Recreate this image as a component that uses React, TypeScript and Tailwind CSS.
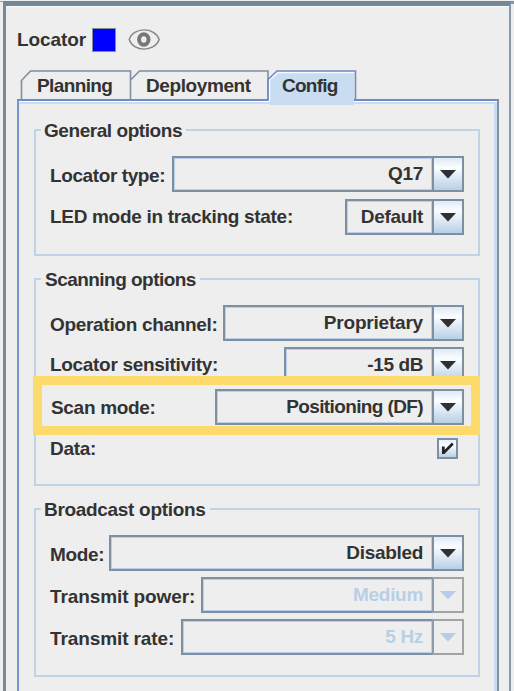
import type { ReactNode } from "react";

type ComboProps = { value: string; width: string; tracking?: string; disabled?: boolean };

function Combo({ value, width, tracking = "", disabled = false }: ComboProps) {
  return (
    <div className={`flex h-9 shrink-0 ${width}`}>
      <div className="flex min-w-0 flex-1 border-y-2 border-l-2 border-[#7d8fa1]">
        <div
          className={`flex flex-1 items-center justify-end border border-[#b9d0e8] pr-[8px] ${tracking} ${
            disabled ? "text-[#b8cfe5]" : "text-[#333333]"
          }`}
        >
          {value}
        </div>
      </div>
      <div
        className={`flex w-8 items-center justify-center border-2 ${
          disabled
            ? "border-[#a3a3a6] border-l-[#8c9caf] bg-[#eeeeee]"
            : "border-[#7d8fa1] bg-linear-to-b from-[#dfeaf5] via-[#fbfdff] via-30% to-[#b9cfe6]"
        }`}
      >
        <svg width="18" height="10" viewBox="0 0 18 10">
          <path d="M1 1H17L9 9.5Z" fill={disabled ? "#b5cde5" : "#303030"} />
        </svg>
      </div>
    </div>
  );
}

type RowProps = { label: string; shift?: string; tracking?: string; children: ReactNode };

function Row({ label, shift = "pt-[3px]", tracking = "", children }: RowProps) {
  return (
    <div className="flex h-9 items-center justify-between">
      <span className={`${shift} ${tracking}`}>{label}</span>
      {children}
    </div>
  );
}

type GroupProps = { title: string; className: string; titleClass: string; children: ReactNode };

function Group({ title, className, titleClass, children }: GroupProps) {
  return (
    <section className={`relative flex flex-col border-2 border-[#bed3e8] px-[14px] pt-[25px] ${className}`}>
      <h2 className={`absolute -top-[12px] left-[5px] bg-[#eeeeee] pr-[4px] leading-6 ${titleClass}`}>{title}</h2>
      {children}
    </section>
  );
}

type TabProps = { label: string; width: string; textClass: string; d: string; active?: boolean };

function Tab({ label, width, textClass, d, active = false }: TabProps) {
  return (
    <div className={`relative h-[36px] ${width}`}>
      <svg className="absolute inset-0 h-full w-full overflow-visible" fill="none">
        {active && (
          <>
            <path d="M1.5 36V11L10 2.5H86V36Z" fill="#c8ddf2" />
            <path d="M1.5 32V11L10 3.500H86" stroke="#f8fbff" strokeWidth="1.5" />
          </>
        )}
        <path d={d} stroke={active ? "#6f8bc6" : "#7d8fa1"} strokeWidth="1.6" />
      </svg>
      <span className={`relative top-[5px] block leading-6 ${textClass}`}>{label}</span>
    </div>
  );
}

export default function App() {
  return (
    <main className="flex h-[691px] w-[514px] overflow-hidden bg-[#eeeeee] pt-px font-['Liberation_Sans',Arial,sans-serif] text-[19px] leading-6 font-bold tracking-[-0.31px] whitespace-nowrap text-[#333333]">
      <div className="w-[3px] shrink-0 border-t border-[#98a5b1]" />
      <div className="flex w-[508px] shrink-0 flex-col border-t-5 border-r-2 border-l-3 border-t-[#748797] border-r-[#8798a8] border-l-[#788a99]">
        <div className="h-px shrink-0 bg-[#fafbfc]" />
        <header className="mt-[21px] flex h-6 shrink-0 items-center pl-[11px]">
          <span className="w-[75px] tracking-[-0.1px]">Locator</span>
          <span className="size-6 border border-[#7b8f91] bg-[#0000ff]" />
          <svg className="ml-[12px]" width="33" height="24" viewBox="0 0 33 24" fill="none">
            <path d="M1.2 11.5C5-1.300 27-1.300 31.200 11.500C27 24.300 5 24.300 1.200 11.500Z" stroke="#858585" strokeWidth="1.4" />
            <ellipse cx="15.800" cy="11.500" rx="4.700" ry="5.300" stroke="#777777" strokeWidth="4" />
          </svg>
        </header>
        <nav className="relative z-10 mt-[17px] flex h-[30px] shrink-0 pl-[14px]">
          <Tab label="Planning" width="w-[111px]" textClass="pl-[17px] tracking-[-0.62px]" d="M1.500 31V11.500L10.500 2H110.500V31" />
          <Tab label="Deployment" width="w-[137px]" textClass="pl-[15px] tracking-[-0.4px]" d="M0 10.500L8.500 2H137V31" />
          <Tab label="Config" width="w-[88px]" textClass="pl-[14px] tracking-[-0.75px]" d="M0 31V10.500L9 2H87.500V31.500" active />
        </nav>
        <div className="mr-[10px] ml-[11px] flex flex-1 flex-col border-t-2 border-r-2 border-l-2 border-t-[#6f8bc6] border-r-[#8292a3] border-l-[#7897d2]">
          <div className="flex flex-1 flex-col border-t border-t-white">
            <div className="flex flex-1 flex-col border-t-2 border-r-3 border-l border-[#c8ddf2] border-l-[#dce9f7] px-[14px]">
              <Group title="General options" titleClass="pl-[3px] tracking-[-0.44px]" className="mt-[25px] h-[127px] gap-[7px]">
                <Row label="Locator type:" tracking="tracking-[-0.4px]"><Combo value="Q17" width="w-[292px]" /></Row>
                <Row label="LED mode in tracking state:" shift="pt-0"><Combo value="Default" width="w-[119px]" /></Row>
              </Group>
              <Group title="Scanning options" titleClass="pl-[4px] tracking-[-0.53px]" className="mt-[22px] h-[208px] gap-[6px]">
                <Row label="Operation channel:"><Combo value="Proprietary" width="w-[241px]" tracking="tracking-[-0.2px]" /></Row>
                <Row label="Locator sensitivity:" shift="pt-0"><Combo value="-15 dB" width="w-[180px]" tracking="tracking-[-0.4px]" /></Row>
                <Row label="Scan mode:" shift="pt-[2px] pl-px"><Combo value="Positioning (DF)" width="w-[249px]" tracking="tracking-[-0.62px]" /></Row>
                <Row label="Data:" shift="pt-0">
                  <span className="mr-[6px] mb-[2px] flex size-[21px] items-center justify-center border-2 border-[#7d8fa1] bg-linear-to-b from-[#e8f0f8] via-white via-30% to-[#b9cfe6]">
                    <svg width="15" height="15" viewBox="0 0 15 15" fill="none">
                      <path d="M3.300 5.500V13M3.500 12L12.800 2.500" stroke="#242424" strokeWidth="2.700" />
                    </svg>
                  </span>
                </Row>
                <div className="absolute top-[96px] -left-[3px] h-[59px] w-[447px] border-9 border-[#fcda6b]" />
              </Group>
              <Group title="Broadcast options" titleClass="pl-[3px] tracking-[-0.31px]" className="mt-[22px] h-[169px] gap-[6px]">
                <Row label="Mode:"><Combo value="Disabled" width="w-[355px]" /></Row>
                <Row label="Transmit power:" tracking="tracking-[-0.1px]"><Combo value="Medium" width="w-[263px]" disabled /></Row>
                <Row label="Transmit rate:" tracking="tracking-[-0.1px]"><Combo value="5 Hz" width="w-[283px]" disabled /></Row>
              </Group>
            </div>
          </div>
        </div>
      </div>
      <div className="w-[3px] shrink-0 border-t-3 border-[#8797a5]" />
    </main>
  );
}
